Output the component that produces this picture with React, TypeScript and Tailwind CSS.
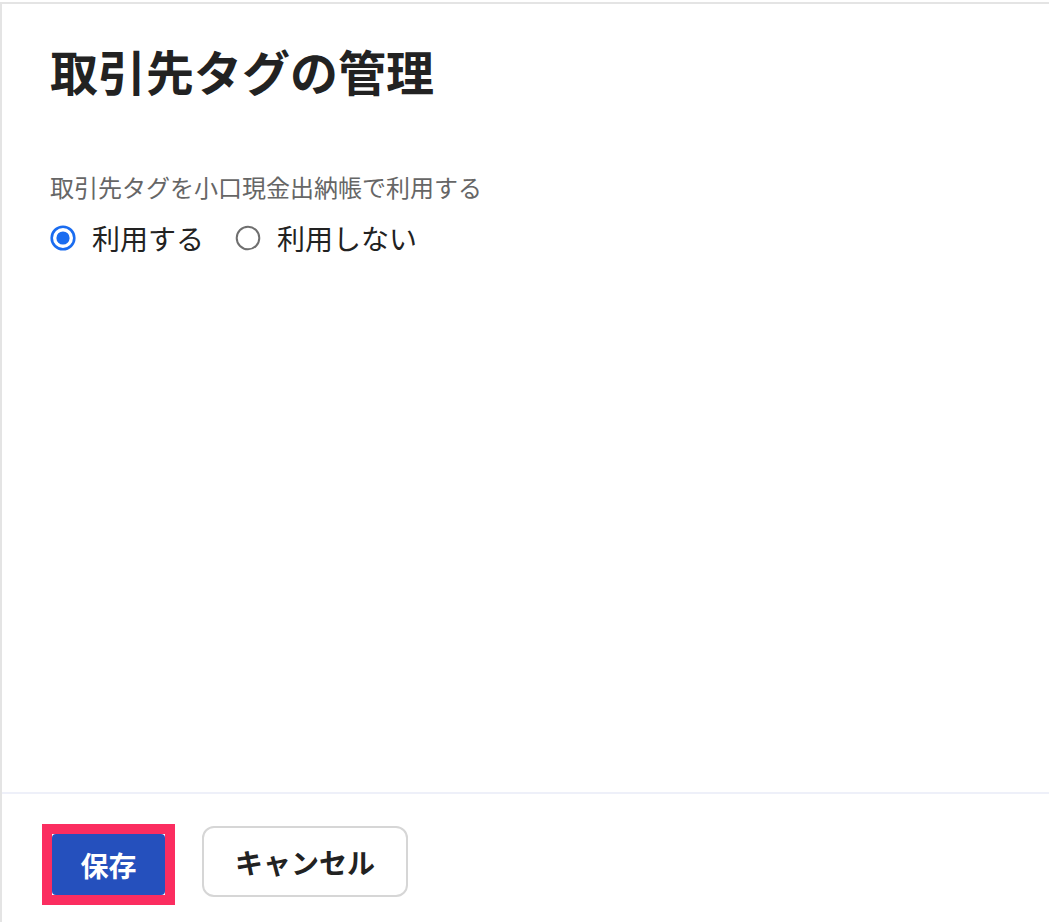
import React, { useState } from "react";

const font = { fontFamily: '"Noto Sans CJK JP", "Noto Sans", sans-serif' };

const Radio: React.FC<{ checked: boolean; label: string; onClick: () => void }> = ({
  checked,
  label,
  onClick,
}) => (
  <label className="flex items-center cursor-pointer" onClick={onClick}>
    {checked ? (
      <svg width="26" height="26" viewBox="0 0 26 26" className="shrink-0">
        <circle cx="13" cy="13" r="11.3" fill="white" stroke="#1a6cf0" strokeWidth="2.6" />
        <circle cx="13" cy="13" r="6.6" fill="#1a6cf0" />
      </svg>
    ) : (
      <svg width="26" height="26" viewBox="0 0 26 26" className="shrink-0">
        <circle cx="13" cy="13" r="11.3" fill="white" stroke="#6f6f6f" strokeWidth="2" />
      </svg>
    )}
    <span className="ml-[16px] text-[28px] leading-[36px] text-[#222]">{label}</span>
  </label>
);

export default function App() {
  const [use, setUse] = useState(true);

  return (
    <div className="h-[922px] w-full bg-white pt-[2px]" style={font}>
      <div className="flex h-full flex-col border-l-2 border-t-2 border-[#e4e4e4]">
        {/* body */}
        <div className="flex-1 pl-[48px] pt-[41px]">
          <h1 className="text-[48px] font-bold leading-[50px] text-[#222]">取引先タグの管理</h1>
          <p className="mt-[77px] text-[24px] leading-[30px] text-[#666]">
            取引先タグを小口現金出納帳で利用する
          </p>
          <div className="mt-[18px] flex items-center gap-[31px]">
            <Radio checked={use} label="利用する" onClick={() => setUse(true)} />
            <Radio checked={!use} label="利用しない" onClick={() => setUse(false)} />
          </div>
        </div>

        {/* footer */}
        <div className="h-[130px] border-t-2 border-[#eef0f9] pl-[40px] pt-[30px]">
          <div className="flex items-start gap-[27px]">
            <div className="bg-[#fb2d60] p-[10px]">
              <div className="bg-white">
                <button className="flex h-[61px] w-[113px] items-center justify-center rounded-[4px] bg-[#2550bd] text-[28px] font-bold text-white">
                  保存
                </button>
              </div>
            </div>
            <button className="mt-[2px] flex h-[71px] w-[206px] items-center justify-center rounded-[12px] border-2 border-[#d6d6d6] bg-white text-[28px] font-bold text-[#222]">
              キャンセル
            </button>
          </div>
        </div>
      </div>
    </div>
  );
}
